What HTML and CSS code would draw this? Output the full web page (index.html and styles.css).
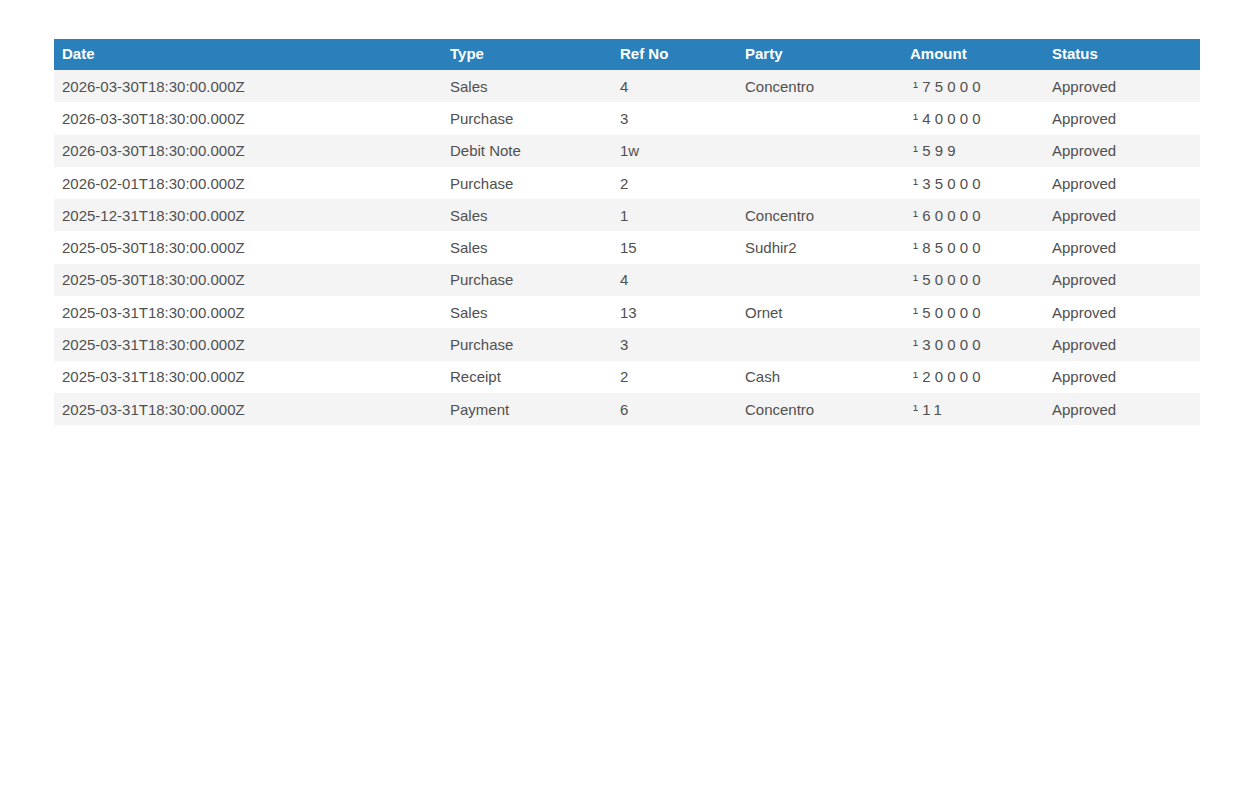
FILE: index.html
```html
<!DOCTYPE html>
<html>
<head>
<meta charset="utf-8">
<link rel="stylesheet" href="styles.css">
</head>
<body>
<div class="page">
<table class="report">
<thead>
<tr><th class="c-date">Date</th><th class="c-type">Type</th><th class="c-ref">Ref No</th><th class="c-party">Party</th><th class="c-amt">Amount</th><th class="c-status">Status</th></tr>
</thead>
<tbody>
<tr><td>2026-03-30T18:30:00.000Z</td><td>Sales</td><td>4</td><td>Concentro</td><td class="amt">¹75000</td><td>Approved</td></tr>
<tr><td>2026-03-30T18:30:00.000Z</td><td>Purchase</td><td>3</td><td></td><td class="amt">¹40000</td><td>Approved</td></tr>
<tr><td>2026-03-30T18:30:00.000Z</td><td>Debit Note</td><td>1w</td><td></td><td class="amt">¹599</td><td>Approved</td></tr>
<tr><td>2026-02-01T18:30:00.000Z</td><td>Purchase</td><td>2</td><td></td><td class="amt">¹35000</td><td>Approved</td></tr>
<tr><td>2025-12-31T18:30:00.000Z</td><td>Sales</td><td>1</td><td>Concentro</td><td class="amt">¹60000</td><td>Approved</td></tr>
<tr><td>2025-05-30T18:30:00.000Z</td><td>Sales</td><td>15</td><td>Sudhir2</td><td class="amt">¹85000</td><td>Approved</td></tr>
<tr><td>2025-05-30T18:30:00.000Z</td><td>Purchase</td><td>4</td><td></td><td class="amt">¹50000</td><td>Approved</td></tr>
<tr><td>2025-03-31T18:30:00.000Z</td><td>Sales</td><td>13</td><td>Ornet</td><td class="amt">¹50000</td><td>Approved</td></tr>
<tr><td>2025-03-31T18:30:00.000Z</td><td>Purchase</td><td>3</td><td></td><td class="amt">¹30000</td><td>Approved</td></tr>
<tr><td>2025-03-31T18:30:00.000Z</td><td>Receipt</td><td>2</td><td>Cash</td><td class="amt">¹20000</td><td>Approved</td></tr>
<tr><td>2025-03-31T18:30:00.000Z</td><td>Payment</td><td>6</td><td>Concentro</td><td class="amt">¹11</td><td>Approved</td></tr>
</tbody>
</table>
</div>
</body>
</html>
```
FILE: styles.css
```css
html, body {
  margin: 0;
  padding: 0;
  background: #ffffff;
}
.page {
  padding: 39px 54px 0 54px;
  font-family: "Liberation Sans", Arial, sans-serif;
}
.report {
  width: 1146px;
  border-collapse: collapse;
  table-layout: fixed;
  font-size: 15px;
  color: #505050;
}
.report th {
  background: #2980ba;
  color: #ffffff;
  font-weight: bold;
  text-align: left;
  height: 31px;
  padding: 0 8px;
  box-sizing: border-box;
  line-height: 29px;
  vertical-align: top;
}
.report td {
  height: 32.3px;
  padding: 0 8px;
  box-sizing: border-box;
  white-space: nowrap;
}
.report tbody tr:nth-child(odd) td {
  background: #f4f4f4;
}
.c-date { width: 388px; }
.c-type { width: 170px; }
.c-ref { width: 125px; }
.c-party { width: 165px; }
.c-amt { width: 142px; }
.c-status { width: 156px; }
.amt {
  letter-spacing: 4.2px;
  text-indent: 3px;
}
```
